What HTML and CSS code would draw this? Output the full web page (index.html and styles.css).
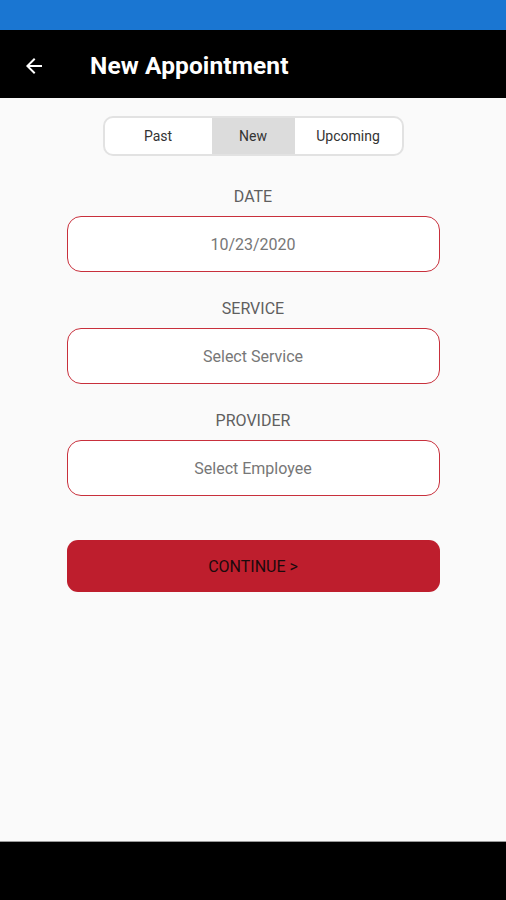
FILE: index.html
```html
<!DOCTYPE html>
<html lang="en">
  <head>
    <meta charset="UTF-8" />
    <meta name="viewport" content="width=device-width, initial-scale=1.0" />
    <title>New Appointment</title>
    <link rel="stylesheet" href="styles.css">
  </head>

  <body>
    <div class="status-bar"></div>
    <header class="app-bar">
      <svg class="back" width="24" height="24" viewBox="0 0 24 24">
        <path d="M20 11H7.83l5.59-5.59L12 4l-8 8 8 8 1.41-1.41L7.83 13H20v-2z" fill="#fff" />
      </svg>
      <h1>New Appointment</h1>
    </header>
    <main class="content">
      <div class="tabs">
        <span class="tab">Past</span>
        <span class="tab active">New</span>
        <span class="tab">Upcoming</span>
      </div>
      <form class="form">
        <label class="field">
          <span class="field-label">DATE</span>
          <span class="field-box">10/23/2020</span>
        </label>
        <label class="field">
          <span class="field-label">SERVICE</span>
          <span class="field-box">Select Service</span>
        </label>
        <label class="field">
          <span class="field-label">PROVIDER</span>
          <span class="field-box">Select Employee</span>
        </label>
        <button type="button" class="continue">CONTINUE &gt;</button>
      </form>
    </main>
    <div class="nav-bar"></div>
  </body>
</html>
```

FILE: styles.css
```css
html {
  background-color: #fafafa;
  font-family: Roboto, "Liberation Sans", Arial, sans-serif;
}
body {
  margin: 0;
  height: 900px;
  display: flex;
  flex-direction: column;
}
.status-bar {
  height: 30px;
  background: #1a76d2;
}
.app-bar {
  height: 68px;
  background: #000;
  display: flex;
  align-items: center;
  padding-left: 22px;
  padding-top: 3px;
  box-sizing: border-box;
}
.back {
  margin-right: 44px;
}
.app-bar h1 {
  margin: 0;
  color: #fff;
  font-size: 24.5px;
  font-weight: 700;
  letter-spacing: 0.1px;
}
.content {
  flex: 1;
  display: flex;
  flex-direction: column;
  align-items: center;
  padding-top: 18px;
}
.tabs {
  display: flex;
  width: 297px;
  height: 36px;
  border: 2px solid #e2e2e2;
  border-radius: 10px;
  overflow: hidden;
  background: #fff;
}
.tab {
  display: flex;
  align-items: center;
  justify-content: center;
  font-size: 14px;
  color: #333;
}
.tab:nth-child(1) {
  width: 107px;
}
.tab:nth-child(2) {
  width: 83px;
}
.tab:nth-child(3) {
  flex: 1;
}
.tab.active {
  background: #dcdcdc;
}
.form {
  display: flex;
  flex-direction: column;
  align-items: center;
  width: 373px;
  margin-top: 32px;
  gap: 28px;
}
.field {
  display: flex;
  flex-direction: column;
  align-items: center;
  gap: 10px;
  width: 100%;
}
.field-label {
  font-size: 16px;
  color: #5f5f5f;
  line-height: 18px;
}
.field-box {
  box-sizing: border-box;
  width: 100%;
  height: 56px;
  display: flex;
  align-items: center;
  justify-content: center;
  border: 1px solid #c8303c;
  border-radius: 14px;
  background: #fff;
  font-size: 16px;
  color: #777;
}
.continue {
  margin-top: 16px;
  width: 100%;
  height: 52px;
  border: none;
  border-radius: 11px;
  background: #be1e2d;
  color: #1a0a0c;
  font-family: inherit;
  font-size: 16px;
}
.nav-bar {
  height: 58px;
  background: #000;
  border-top: 1px solid #9a9a9a;
}
```
